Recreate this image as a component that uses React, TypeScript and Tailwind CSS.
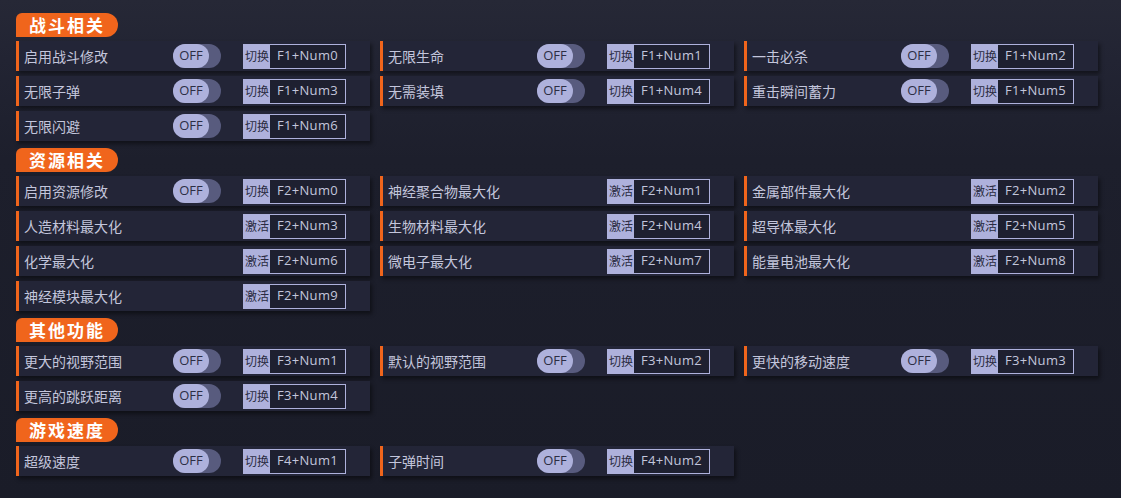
// Trainer panel: grouped cheat toggles with hotkey hints.

type Item = {
  label: string;
  hotkey: string;
  toggle?: boolean; // true → OFF switch + 切换, false → 激活 only
};

type Section = { title: string; items: Item[] };

const sections: Section[] = [
  {
    title: "战斗相关",
    items: [
      { label: "启用战斗修改", hotkey: "F1+Num0", toggle: true },
      { label: "无限生命", hotkey: "F1+Num1", toggle: true },
      { label: "一击必杀", hotkey: "F1+Num2", toggle: true },
      { label: "无限子弹", hotkey: "F1+Num3", toggle: true },
      { label: "无需装填", hotkey: "F1+Num4", toggle: true },
      { label: "重击瞬间蓄力", hotkey: "F1+Num5", toggle: true },
      { label: "无限闪避", hotkey: "F1+Num6", toggle: true },
    ],
  },
  {
    title: "资源相关",
    items: [
      { label: "启用资源修改", hotkey: "F2+Num0", toggle: true },
      { label: "神经聚合物最大化", hotkey: "F2+Num1" },
      { label: "金属部件最大化", hotkey: "F2+Num2" },
      { label: "人造材料最大化", hotkey: "F2+Num3" },
      { label: "生物材料最大化", hotkey: "F2+Num4" },
      { label: "超导体最大化", hotkey: "F2+Num5" },
      { label: "化学最大化", hotkey: "F2+Num6" },
      { label: "微电子最大化", hotkey: "F2+Num7" },
      { label: "能量电池最大化", hotkey: "F2+Num8" },
      { label: "神经模块最大化", hotkey: "F2+Num9" },
    ],
  },
  {
    title: "其他功能",
    items: [
      { label: "更大的视野范围", hotkey: "F3+Num1", toggle: true },
      { label: "默认的视野范围", hotkey: "F3+Num2", toggle: true },
      { label: "更快的移动速度", hotkey: "F3+Num3", toggle: true },
      { label: "更高的跳跃距离", hotkey: "F3+Num4", toggle: true },
    ],
  },
  {
    title: "游戏速度",
    items: [
      { label: "超级速度", hotkey: "F4+Num1", toggle: true },
      { label: "子弹时间", hotkey: "F4+Num2", toggle: true },
    ],
  },
];

const FONT =
  "font-['Microsoft_YaHei','Noto_Sans_CJK_SC','Noto_Sans',sans-serif]";

export default function App() {
  return (
    <div
      className={`h-[498px] w-full overflow-hidden bg-[linear-gradient(180deg,#262836_0px,#222433_60px,#1d1f2c_160px,#1a1c28_100%)] px-4 pt-[13px] ${FONT}`}
    >
      {sections.map((s, i) => (
        <div key={s.title} className={i > 0 ? "mt-[7px]" : ""}>
          <SectionTitle title={s.title} />
          <div className="mt-[4px] grid w-[1082px] grid-cols-3 gap-x-[10px] gap-y-[5px]">
            {s.items.map((it) => (
              <Row key={it.label} item={it} />
            ))}
          </div>
        </div>
      ))}
    </div>
  );
}

function SectionTitle({ title }: { title: string }) {
  return (
    <div className="flex h-[24px] w-[102px] items-center justify-center rounded-tl-[6px] rounded-r-[12px] bg-[#f0651c] text-[17px] font-bold tracking-[2px] text-white">
      {title}
    </div>
  );
}

function Row({ item }: { item: Item }) {
  return (
    <div className="flex h-[30px] items-center border-l-[3px] border-[#f0651c] bg-[#232537] pl-[5px] shadow-[2px_3px_4px_rgba(0,0,0,0.45)]">
      <span className="w-[149px] text-[14px] text-[#c3c6dc]">{item.label}</span>
      <div className="w-[70px]">{item.toggle ? <OffSwitch /> : null}</div>
      <HotkeyBox
        action={item.toggle ? "切换" : "激活"}
        hotkey={item.hotkey}
      />
    </div>
  );
}

function OffSwitch() {
  return (
    <div className="flex h-[24px] w-[48px] rounded-full bg-[#585b7e]">
      <div className="flex h-[24px] w-[36px] items-center justify-center rounded-full bg-[#aeb1dc] text-[13px] text-[#2c2e44] font-['Segoe_UI','Open_Sans',sans-serif]">
        OFF
      </div>
    </div>
  );
}

function HotkeyBox({ action, hotkey }: { action: string; hotkey: string }) {
  return (
    <div className="flex h-[25px] w-[103px] border border-[#aeb1dc]">
      <span className="flex w-[26px] items-center justify-center bg-[#aeb1dc] text-[12px] text-[#2a2c42]">
        {action}
      </span>
      <span className="flex flex-1 items-center justify-center bg-[#1e2030] text-[13px] tracking-[0.3px] text-[#c3c6dc] font-['Segoe_UI','Open_Sans',sans-serif]">
        {hotkey}
      </span>
    </div>
  );
}
